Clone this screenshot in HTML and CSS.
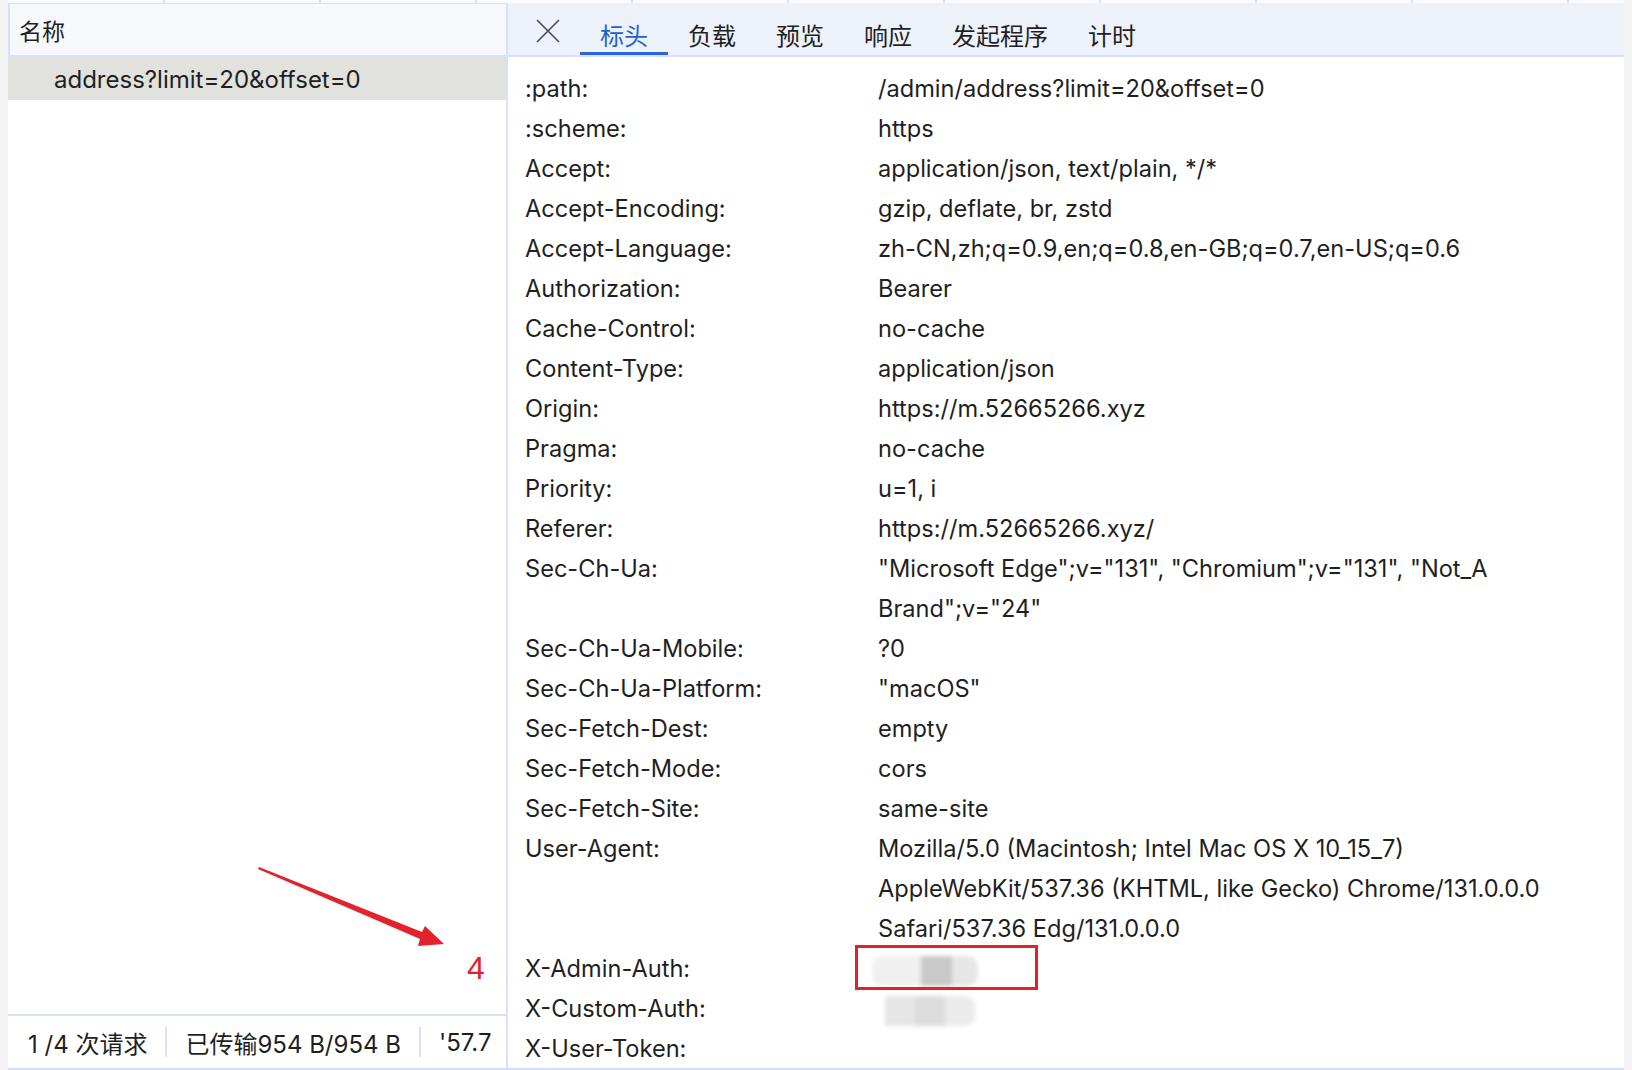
FILE: index.html
```html
<!DOCTYPE html>
<html lang="zh-CN">
<head>
<meta charset="utf-8">
<title>Network</title>
<link rel="stylesheet" href="styles.css">
</head>
<body>
<div class="topstrip">
  <span class="tcell"></span><span class="tcell"></span><span class="tcell"></span><span class="tcell"></span><span class="tcell"></span>
  <span class="tcell"></span><span class="tcell"></span><span class="tcell"></span><span class="tcell"></span><span class="tcell"></span><span class="tcell"></span>
</div>
<div class="main">
  <aside class="left">
    <div class="lhead">名称</div>
    <div class="lrow sel">address?limit=20&amp;offset=0</div>
    <div class="lspacer"></div>
    <div class="lfoot">
      <span>1 /4 次请求</span><i class="sep"></i><span>已传输954 B/954 B</span><i class="sep"></i><span>'57.7</span>
    </div>
  </aside>
  <section class="right">
    <div class="tabs">
      <span class="close"><svg width="24" height="24" viewBox="0 0 24 24"><path d="M1 1 L23 23 M23 1 L1 23" stroke="#4a4a4a" stroke-width="1.6" fill="none"/></svg></span>
      <span class="tab active">标头</span>
      <span class="tab">负载</span>
      <span class="tab">预览</span>
      <span class="tab">响应</span>
      <span class="tab">发起程序</span>
      <span class="tab">计时</span>
    </div>
    <div class="hdrs">
      <div class="row"><span class="k">:path:</span><span class="v">/admin/address?limit=20&amp;offset=0</span></div>
      <div class="row"><span class="k">:scheme:</span><span class="v">https</span></div>
      <div class="row"><span class="k">Accept:</span><span class="v">application/json, text/plain, */*</span></div>
      <div class="row"><span class="k">Accept-Encoding:</span><span class="v">gzip, deflate, br, zstd</span></div>
      <div class="row"><span class="k">Accept-Language:</span><span class="v">zh-CN,zh;q=0.9,en;q=0.8,en-GB;q=0.7,en-US;q=0.6</span></div>
      <div class="row"><span class="k">Authorization:</span><span class="v">Bearer</span></div>
      <div class="row"><span class="k">Cache-Control:</span><span class="v">no-cache</span></div>
      <div class="row"><span class="k">Content-Type:</span><span class="v">application/json</span></div>
      <div class="row"><span class="k">Origin:</span><span class="v">https://m.52665266.xyz</span></div>
      <div class="row"><span class="k">Pragma:</span><span class="v">no-cache</span></div>
      <div class="row"><span class="k">Priority:</span><span class="v">u=1, i</span></div>
      <div class="row"><span class="k">Referer:</span><span class="v">https://m.52665266.xyz/</span></div>
      <div class="row"><span class="k">Sec-Ch-Ua:</span><span class="v">"Microsoft Edge";v="131", "Chromium";v="131", "Not_A<br>Brand";v="24"</span></div>
      <div class="row"><span class="k">Sec-Ch-Ua-Mobile:</span><span class="v">?0</span></div>
      <div class="row"><span class="k">Sec-Ch-Ua-Platform:</span><span class="v">"macOS"</span></div>
      <div class="row"><span class="k">Sec-Fetch-Dest:</span><span class="v">empty</span></div>
      <div class="row"><span class="k">Sec-Fetch-Mode:</span><span class="v">cors</span></div>
      <div class="row"><span class="k">Sec-Fetch-Site:</span><span class="v">same-site</span></div>
      <div class="row"><span class="k">User-Agent:</span><span class="v">Mozilla/5.0 (Macintosh; Intel Mac OS X 10_15_7)<br>AppleWebKit/537.36 (KHTML, like Gecko) Chrome/131.0.0.0<br>Safari/537.36 Edg/131.0.0.0</span></div>
      <div class="row"><span class="k">X-Admin-Auth:</span><span class="v"><span class="blur b1"><i class="p pa"></i><i class="p pb"></i><i class="p pc"></i></span></span></div>
      <div class="row"><span class="k">X-Custom-Auth:</span><span class="v"><span class="blur b2"><i class="p pd"></i><i class="p pe"></i><i class="p pf"></i></span></span></div>
      <div class="row"><span class="k">X-User-Token:</span><span class="v"></span></div>
    </div>
  </section>
</div>

<div class="redbox"></div>
<span class="note">4</span>
<svg class="arrow" width="1632" height="1070" viewBox="0 0 1632 1070">
  <polygon points="259,867 422,932 425,926 444,944 418,946 420,939 258,869" fill="#e3232b"/>
</svg>
</body>
</html>
```

FILE: styles.css
```css
html, body {
  margin: 0;
  padding: 0;
}
body {
  width: 1632px;
  height: 1070px;
  overflow: hidden;
  position: relative;
  background: #f4f4f4;
  font-family: Inter, "Noto Sans CJK SC", sans-serif;
  color: #1f1f1f;
}

.topstrip {
  display: flex;
  margin-left: 8px;
  width: 1616px;
  height: 3px;
  background: #fbfcff;
  overflow: hidden;
}
.tcell {
  flex: none;
  width: 156px;
  height: 3px;
  box-sizing: border-box;
  border-right: 2px solid #d5e1f6;
}
.tcell:first-child { width: 157px; }

.main {
  display: flex;
  margin-left: 8px;
  width: 1616px;
  height: 1065px;
  border-bottom: 2px solid #d3e0f7;
}

.left {
  flex: none;
  width: 500px;
  box-sizing: border-box;
  background: #fff;
  border-right: 2px solid #d6e2f7;
  display: flex;
  flex-direction: column;
}
.lhead {
  height: 54px;
  box-sizing: border-box;
  background: #f7f8fc;
  border-top: 1px solid #d6e2f7;
  border-left: 2px solid #d6e2f7;
  border-bottom: 2px solid #d6e2f7;
  padding-left: 9px;
  font-size: 23px;
  display: flex;
  align-items: center;
}
.lrow {
  height: 43px;
  line-height: 45px;
  font-size: 24px;
  padding-left: 46px;
  white-space: nowrap;
}
.lrow.sel { background: #e1e2de; }
.lspacer { flex: 1; }
.lfoot {
  height: 54px;
  box-sizing: border-box;
  border-top: 2px solid #d6e2f7;
  display: flex;
  align-items: center;
  padding-left: 20px;
  font-size: 24px;
  white-space: nowrap;
  overflow: hidden;
}
.sep {
  flex: none;
  width: 2px;
  height: 30px;
  background: #d6e2f7;
  margin: 0 18px;
}

.right {
  flex: 1;
  min-width: 0;
  background: #fff;
  display: flex;
  flex-direction: column;
  overflow: hidden;
}
.tabs {
  flex: none;
  height: 54px;
  box-sizing: border-box;
  background: #edf1f9;
  border-bottom: 2px solid #d3e0f7;
  display: flex;
  align-items: flex-start;
}
.close {
  flex: none;
  width: 24px;
  height: 24px;
  margin: 16px 20px 0 28px;
}
.close svg { display: block; }
.tab {
  flex: none;
  height: 52px;
  box-sizing: border-box;
  padding: 15px 20px 0;
  font-size: 24px;
  line-height: 37px;
  color: #1f1f1f;
  white-space: nowrap;
}
.tab.active {
  color: #1f5fd4;
  box-shadow: inset 0 -3px 0 #2b66db;
}

.hdrs {
  padding: 12px 0 0 17px;
  font-size: 23.6px;
  line-height: 40px;
}
.row {
  display: grid;
  grid-template-columns: 353px 1fr;
}
.k, .v { white-space: nowrap; }

.blur {
  display: inline-flex;
  vertical-align: middle;
  filter: blur(2px);
  height: 30px;
}
.b1 { margin-left: -6px; }
.b2 { margin-left: 7px; }
.p { display: block; height: 30px; }
.pa { width: 49px; background: #f0f0f0; border-radius: 10px 0 0 10px; }
.pb { width: 31px; background: #c9c9c9; }
.pc { width: 26px; background: #e6e6e6; border-radius: 0 10px 10px 0; }
.pd { width: 30px; background: #e6e6e6; }
.pe { width: 30px; background: #dcdcdc; }
.pf { width: 30px; background: #ebebeb; border-radius: 0 10px 10px 0; }

.redbox {
  position: absolute;
  left: 855px;
  top: 945px;
  width: 183px;
  height: 45px;
  box-sizing: border-box;
  border: 3px solid #e3212a;
}
.note {
  position: absolute;
  left: 467px;
  top: 948px;
  font-family: "Liberation Sans", sans-serif;
  font-size: 32px;
  line-height: 40px;
  color: #e3212a;
}
.arrow {
  position: absolute;
  left: 0;
  top: 0;
  pointer-events: none;
}
```
